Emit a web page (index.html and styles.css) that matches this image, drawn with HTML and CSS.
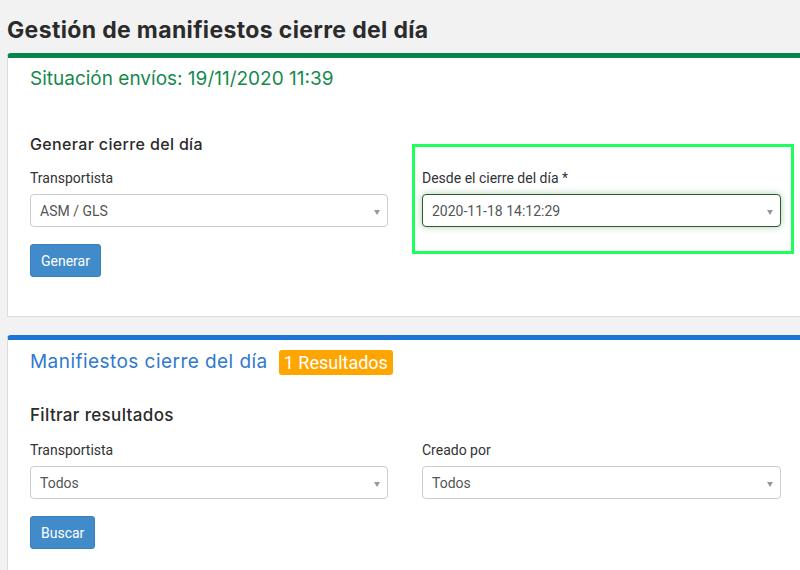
FILE: index.html
```html
<!DOCTYPE html>
<html lang="es">
<head>
  <meta charset="UTF-8" />
  <meta name="viewport" content="width=device-width, initial-scale=1.0" />
  <title>Gestión de manifiestos cierre del día</title>
  <link rel="stylesheet" href="styles.css">
</head>
<body>
  <h1 class="page-title">Gestión de manifiestos cierre del día</h1>

  <!-- Situacion de envios / generar cierre -->
  <div class="panel panel-green">
    <div class="panel-title">Situación envíos: 19/11/2020 11:39</div>

    <div class="form-row">
      <div class="col">
        <h3 class="section-title">Generar cierre del día</h3>
        <div class="form-group">
          <label for="carrier">Transportista</label>
          <div class="select-wrap">
            <select id="carrier" name="carrier">
              <option>ASM / GLS</option>
            </select>
          </div>
        </div>
        <button type="button" class="btn">Generar</button>
      </div>

      <div class="col col-highlight">
        <div class="form-group">
          <label for="since">Desde el cierre del día *</label>
          <div class="select-wrap">
            <select id="since" name="since" class="focused">
              <option>2020-11-18 14:12:29</option>
            </select>
          </div>
        </div>
      </div>
    </div>
  </div>

  <!-- Listado de manifiestos -->
  <div class="panel panel-blue">
    <div class="panel-title">
      Manifiestos cierre del día
      <span class="badge">1 Resultados</span>
    </div>

    <h3 class="section-title filter-title">Filtrar resultados</h3>
    <div class="form-row form-row-filter">
      <div class="col">
        <div class="form-group">
          <label for="filterCarrier">Transportista</label>
          <div class="select-wrap">
            <select id="filterCarrier" name="carrier_filter">
              <option>Todos</option>
            </select>
          </div>
        </div>
        <button type="button" class="btn">Buscar</button>
      </div>
      <div class="col">
        <div class="form-group">
          <label for="createdBy">Creado por</label>
          <div class="select-wrap">
            <select id="createdBy" name="created_by">
              <option>Todos</option>
            </select>
          </div>
        </div>
      </div>
    </div>
  </div>
</body>
</html>
```

FILE: styles.css
```css
body {
  font-family: Roboto, "Liberation Sans", sans-serif;
  background: #f2f2f2;
  margin: 0;
  padding: 0 0 0 7px;
  overflow: hidden;
  color: #333;
}
.page-title {
  font-family: Inter, "Open Sans", sans-serif;
  font-size: 23px;
  font-weight: 700;
  letter-spacing: 0.35px;
  line-height: 30px;
  color: #2b2b2b;
  margin: 15px 0 8px;
}
/* Panels */
.panel {
  width: 820px;
  background: #fff;
  border: 1px solid #ddd;
  border-top-width: 5px;
  border-radius: 4px 0 0 0;
  padding: 7px 0 39px 22px;
  box-sizing: border-box;
}
.panel-green {
  border-top-color: #05854a;
}
.panel-blue {
  border-top-color: #1c74d4;
  margin-top: 18px;
  padding-top: 8px;
}
.panel-title {
  font-family: Inter, "Open Sans", sans-serif;
  font-size: 19px;
  line-height: 28px;
  display: flex;
  align-items: center;
}
.panel-green .panel-title {
  color: #16894f;
}
.panel-blue .panel-title {
  color: #2f79cf;
  letter-spacing: 0.45px;
}
.badge {
  font-family: Roboto, sans-serif;
  background: #ffa500;
  color: #fff;
  font-size: 18px;
  letter-spacing: 0;
  line-height: 25px;
  padding: 0 5px;
  border-radius: 3px;
  margin-left: 11px;
}
.section-title {
  font-family: Inter, "Open Sans", sans-serif;
  font-size: 16px;
  font-weight: 500;
  letter-spacing: 0.35px;
  line-height: 24px;
  color: #2b2b2b;
  margin: 0 0 12px;
}
.filter-title {
  font-size: 17px;
  margin: 27px 0 13px;
}
/* Form layout */
.form-row {
  display: grid;
  grid-template-columns: 358px 382px;
  column-gap: 24px;
  align-items: start;
  margin-top: 39px;
}
.form-row-filter {
  grid-template-columns: 358px 359px;
  column-gap: 34px;
  margin-top: 0;
}
.col-highlight {
  margin-top: 12px;
  border: 3px solid #1dff5c;
  padding: 21px 10px 24px 7px;
}
.form-group label {
  display: block;
  font-size: 14px;
  line-height: 20px;
  color: #333;
  margin-bottom: 6px;
}
.select-wrap {
  position: relative;
}
.select-wrap::after {
  content: "";
  position: absolute;
  right: 8px;
  top: 16px;
  border-left: 3.5px solid transparent;
  border-right: 3.5px solid transparent;
  border-top: 5px solid #999;
  pointer-events: none;
}
select {
  appearance: none;
  -webkit-appearance: none;
  width: 100%;
  height: 33px;
  padding: 0 9px;
  border: 1px solid #ccc;
  border-radius: 4px;
  background: #fff;
  font-family: Roboto, sans-serif;
  font-size: 14px;
  color: #555;
  outline: none;
}
select.focused {
  border-color: #2f5a2f;
  box-shadow: 0 0 7px rgba(70, 150, 70, 0.45);
}
.btn {
  display: block;
  margin-top: 17px;
  height: 33px;
  padding: 0 10px;
  background: #428bca;
  border: 1px solid #3b80bf;
  border-radius: 3px;
  color: #fff;
  font-family: Roboto, sans-serif;
  font-size: 14px;
  cursor: pointer;
}
.btn:hover {
  background: #3276b1;
}
```
